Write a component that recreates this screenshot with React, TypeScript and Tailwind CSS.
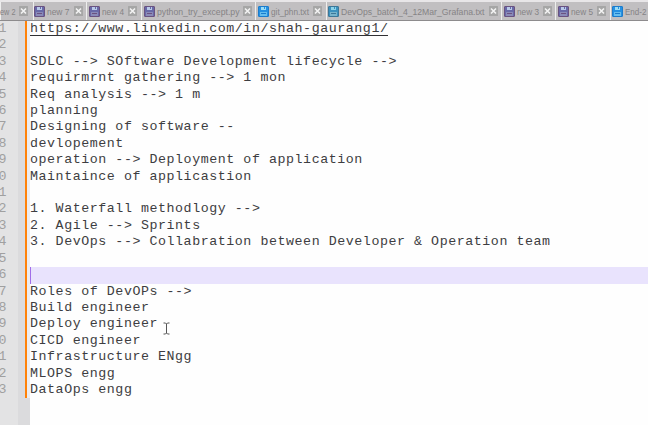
type Tone = "violet" | "blue" | "teal";
type TabInfo = { label: string; tone?: Tone; box: string; text: string; length: number };

const tabs: TabInfo[] = [
  { label: "ew 2", box: "w-[33px] pl-0 pr-[5px]", text: "w-[15px]", length: 15.5 },
  { label: "new 7", tone: "violet", box: "w-[53px] pl-0 pr-[3px]", text: "w-[23px]", length: 22.5 },
  { label: "new 4", tone: "violet", box: "w-[55px] pl-[2px] pr-[4px]", text: "w-[22px]", length: 22 },
  { label: "python_try_except.py", tone: "violet", box: "w-[114px] pl-[2px] pr-[3px]", text: "w-[82px]", length: 82.5 },
  { label: "git_phn.txt", tone: "blue", box: "w-[71px] pl-[2px] pr-[4px]", text: "w-[38px]", length: 38 },
  { label: "DevOps_batch_4_12Mar_Grafana.txt", tone: "teal", box: "w-[175px] pl-px pr-[3px]", text: "w-[144px]", length: 143.5 },
  { label: "new 3", tone: "violet", box: "w-[54px] pl-[2px] pr-[3px]", text: "w-[23px]", length: 22 },
  { label: "new 5", tone: "violet", box: "w-[55px] pl-[2px] pr-[4px]", text: "w-[23px]", length: 22 },
  { label: "End-2", tone: "blue", box: "w-[38px] pl-px", text: "w-[23px]", length: 21.5 },
];

const tones = {
  violet: { edge: "#6a5280", fill: "#6869a8", top: "#b9c9e8", base: "#8a8ab8" },
  blue: { edge: "#1c7ccc", fill: "#2590e2", top: "#9bdcf5", base: "#65bdee" },
  teal: { edge: "#3c7798", fill: "#3b91be", top: "#8ed3e8", base: "#77b4cc" },
};

const lines = [
  "https://www.linkedin.com/in/shah-gaurang1/",
  "",
  "SDLC --> SOftware Development lifecycle -->",
  "requirmrnt gathering --> 1 mon",
  "Req analysis --> 1 m",
  "planning",
  "Designing of software --",
  "devlopement",
  "operation --> Deployment of application",
  "Maintaince of applicastion",
  "",
  "1. Waterfall methodlogy -->",
  "2. Agile --> Sprints",
  "3. DevOps --> Collabration between Developer & Operation team",
  "",
  "",
  "Roles of DevOPs -->",
  "Build engineer",
  "Deploy engineer",
  "CICD engineer",
  "Infrastructure ENgg",
  "MLOPS engg",
  "DataOps engg",
];

function Disk({ tone }: { tone: Tone }) {
  const c = tones[tone];
  return (
    <svg className="h-[11px] w-[11px] shrink-0" viewBox="0 0 11 11">
      <rect x=".5" y=".5" width="10" height="10" rx=".5" fill={c.fill} stroke={c.edge} />
      <rect x="3" y="1" width="5" height="3" fill={c.top} />
      <rect x="6" y="1" width="1" height="2" fill={c.fill} />
      <rect x="2" y="6" width="7" height="4" fill={c.base} />
      <path d="M3 7.5h5" stroke={c.edge} />
    </svg>
  );
}

function Close() {
  return (
    <svg className="ml-auto h-[10px] w-[9px] shrink-0" viewBox="0 0 9 10">
      <rect width="9" height="10" rx=".5" fill="#a6a6a6" />
      <path d="m2 2.5 5 5m0-5-5 5" stroke="#f3f3f3" strokeWidth="1.6" />
    </svg>
  );
}

function Tab({ tab, last }: { tab: TabInfo; last: boolean }) {
  return (
    <div className={`flex h-[18px] shrink-0 items-center border-l border-[#eeeeee] bg-[#c1bfc1] ${tab.box}`}>
      {tab.tone && <Disk tone={tab.tone} />}
      <svg className={`h-[16px] shrink-0 overflow-visible ${tab.tone ? "ml-[2px]" : "-ml-px"} ${tab.text}`}>
        <text x="0" y="11.7" fontFamily="Liberation Sans, sans-serif" fontSize="9.2" fill="#858385" textLength={tab.length} lengthAdjust="spacingAndGlyphs">{tab.label}</text>
      </svg>
      {!last && <Close />}
    </div>
  );
}

export default function App() {
  return (
    <div className="flex h-[425px] w-[648px] flex-col overflow-hidden bg-[#fefefe]">
      <div className="flex h-[21px] shrink-0 overflow-hidden border-b border-[#8d8b8d] bg-[#c1bfc1]">
        <div className="flex h-[20px] border-t-2 border-[#e8e6e8]">
          {tabs.map((tab, i) => <Tab key={tab.label} tab={tab} last={i === tabs.length - 1} />)}
        </div>
      </div>
      <div className="relative flex min-h-0 flex-1 font-['Liberation_Mono',monospace] text-[13.3px] leading-[16.9px] tracking-[0.555px]">
        <div className="w-[18px] shrink-0 bg-[#e3e3e4] text-[#a0a0a0]">
          {lines.map((_, i) => <div key={i} className="-ml-[1.5px] h-[16.41px]">{(i + 1) % 10}</div>)}
        </div>
        <div className="flex w-3 shrink-0 bg-[#dbdbdd]">
          <div className="ml-[7px] h-[377px] w-[5px] border-l-2 border-[#ff8208] bg-[#ececef]" />
        </div>
        <div className="min-w-0 flex-1 whitespace-pre text-[#3d3d41]">
          {lines.map((line, i) => (
            <div key={i} className={`h-[16.41px] ${i === 15 ? "border-l border-[#a16ee8] bg-[#e9e3fd]" : ""}`}>
              {i === 0 ? <span className="inline-block h-[15px] border-b border-[#303033]">{line}</span> : line}
            </div>
          ))}
        </div>
        <svg className="absolute left-[163px] top-[301px] h-[13px] w-[7px]" viewBox="0 0 7 13">
          <path d="M.5 1h2l1 1 1-1h2M3.5 2v9M.5 12h2l1-1 1 1h2" fill="none" stroke="#555" />
        </svg>
      </div>
    </div>
  );
}
